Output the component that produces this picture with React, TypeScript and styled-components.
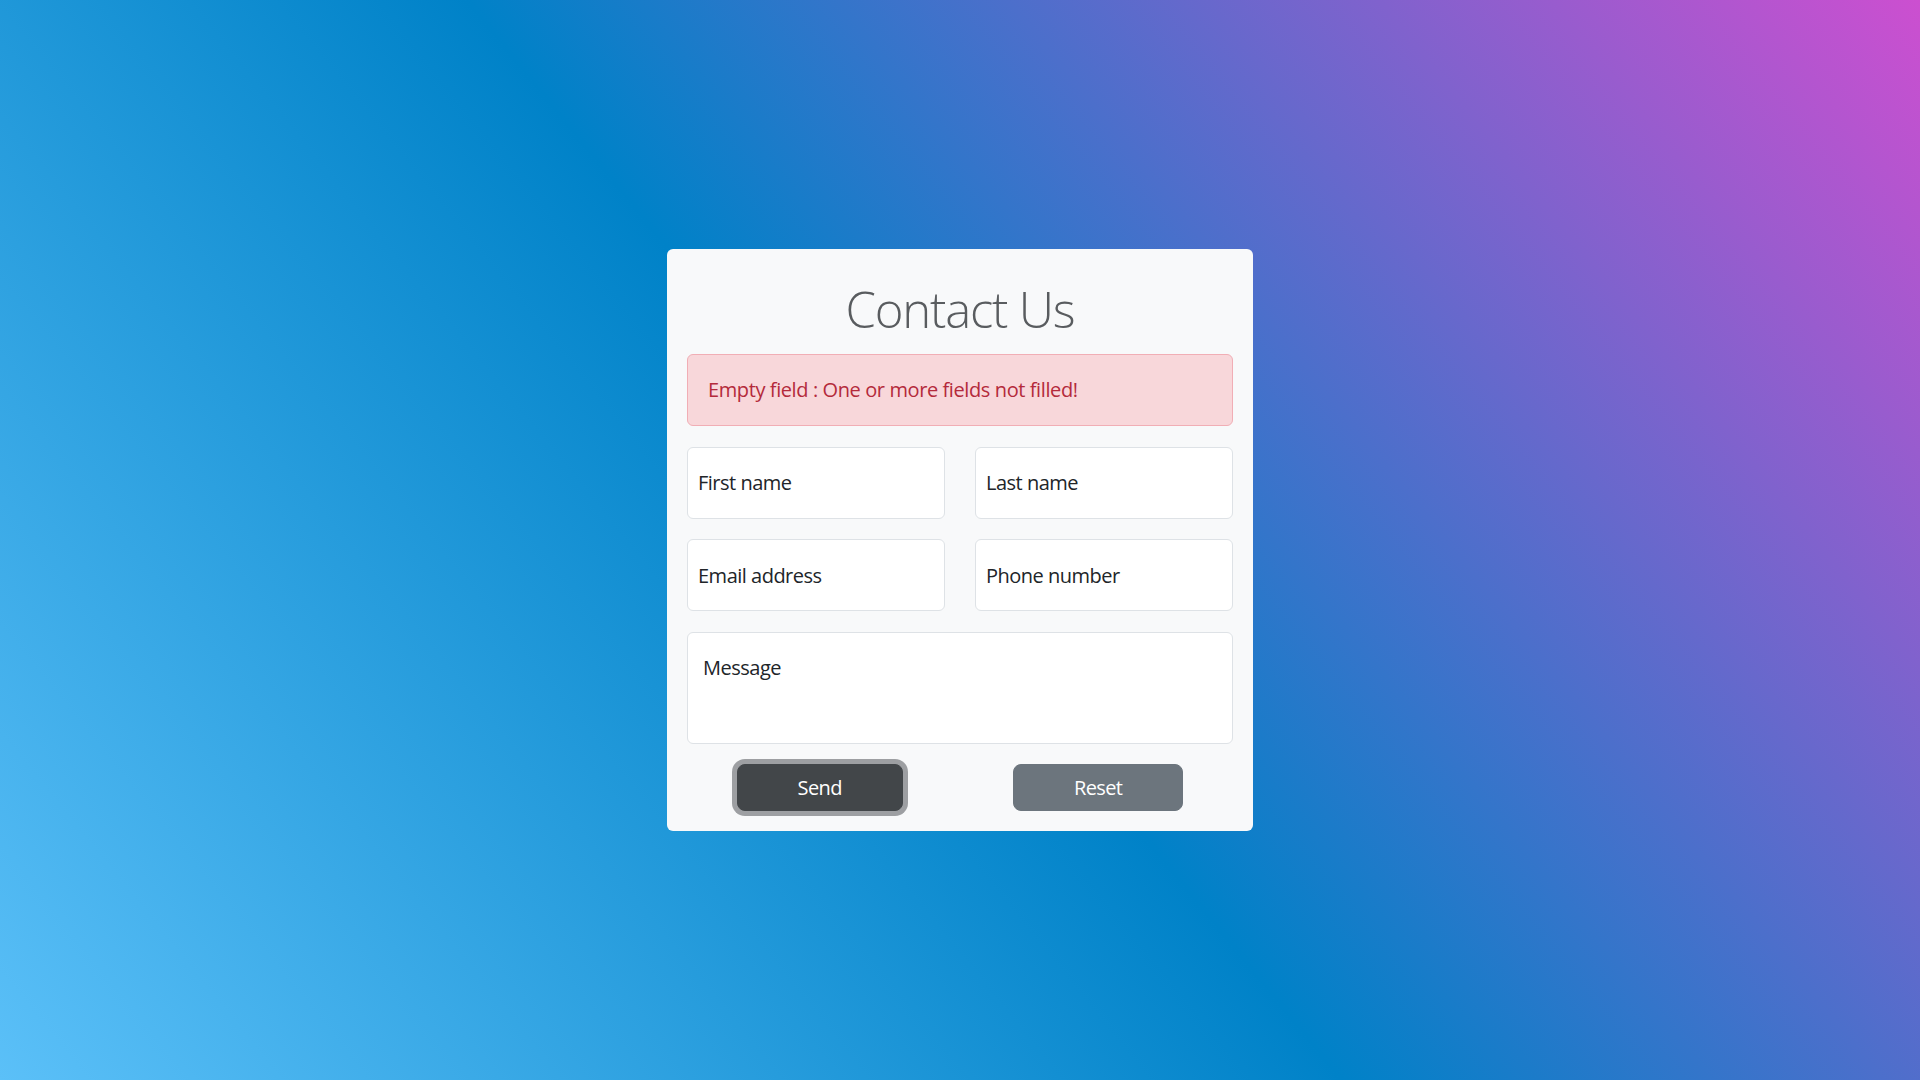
import React from "react";
import styled, { createGlobalStyle } from "styled-components";

const GlobalStyle = createGlobalStyle`
  *, *::before, *::after { box-sizing: border-box; }
  html, body { margin: 0; padding: 0; }
  body {
    font-family: "Open Sans", "Noto Sans", sans-serif;
    color: #212529;
  }
`;

const Page = styled.div`
  min-height: 100vh;
  display: flex;
  align-items: center;
  justify-content: center;
  background: linear-gradient(51deg, #5bc0f8 0%, #0082c8 48%, #cc4fd0 100%);
`;

const Card = styled.div`
  width: 586px;
  background: #f8f9fa;
  border-radius: 6px;
  padding: 20px;
  display: flex;
  flex-direction: column;
`;

const Title = styled.h1`
  margin: 10px 0 15px;
  font-family: "Open Sans", "Noto Sans", sans-serif;
  font-weight: 300;
  font-size: 49px;
  line-height: 60px;
  color: #595c5f;
  text-align: center;
  letter-spacing: -1.2px;
`;

const Alert = styled.div`
  background: #f8d7da;
  border: 1px solid #f1aeb5;
  border-radius: 6px;
  padding: 20px;
  font-size: 20px;
  line-height: 30px;
  color: #b42a3b;
  letter-spacing: -0.4px;
  margin-bottom: 21px;
`;

const Form = styled.form`
  display: flex;
  flex-direction: column;
  gap: 20.5px;
`;

const Row = styled.div`
  display: grid;
  grid-template-columns: 1fr 1fr;
  column-gap: 30px;
`;

const Field = styled.input`
  height: 72px;
  width: 100%;
  border: 1px solid #dee2e6;
  border-radius: 6px;
  background: #fff;
  padding: 0 10px;
  font-family: "Open Sans", "Noto Sans", sans-serif;
  font-size: 20px;
  letter-spacing: -0.5px;
  color: #212529;
  outline: none;
  &::placeholder { color: #212529; opacity: 1; }
`;

const MessageBox = styled.textarea`
  height: 112px;
  width: 100%;
  border: 1px solid #dee2e6;
  border-radius: 6px;
  background: #fff;
  padding: 20px 15px 18px;
  font-family: "Open Sans", "Noto Sans", sans-serif;
  font-size: 20px;
  line-height: 30px;
  letter-spacing: -0.5px;
  color: #212529;
  resize: none;
  outline: none;
  display: block;
  &::placeholder { color: #212529; opacity: 1; }
`;

const Actions = styled.div`
  display: flex;
  justify-content: center;
  gap: 110px;
`;

const Button = styled.button<{ $variant: "dark" | "secondary" }>`
  height: 47px;
  padding: 0 60px;
  border-radius: 8px;
  border: 1px solid ${(p) => (p.$variant === "dark" ? "#424649" : "#6c757d")};
  background: ${(p) => (p.$variant === "dark" ? "#424649" : "#6c757d")};
  color: #fff;
  font-family: "Open Sans", "Noto Sans", sans-serif;
  font-size: 20px;
  letter-spacing: -0.6px;
  line-height: 30px;
  box-shadow: ${(p) => (p.$variant === "dark" ? "0 0 0 5px rgba(66, 70, 73, 0.5)" : "none")};
  cursor: pointer;
`;

export default function App() {
  return (
    <>
      <GlobalStyle />
      <Page>
        <Card>
          <Title>Contact Us</Title>
          <Alert>Empty field : One or more fields not filled!</Alert>
          <Form onSubmit={(e) => e.preventDefault()}>
            <Row>
              <Field type="text" placeholder="First name" />
              <Field type="text" placeholder="Last name" />
            </Row>
            <Row>
              <Field type="email" placeholder="Email address" />
              <Field type="tel" placeholder="Phone number" />
            </Row>
            <MessageBox placeholder="Message" />
            <Actions>
              <Button type="submit" $variant="dark">Send</Button>
              <Button type="reset" $variant="secondary">Reset</Button>
            </Actions>
          </Form>
        </Card>
      </Page>
    </>
  );
}
